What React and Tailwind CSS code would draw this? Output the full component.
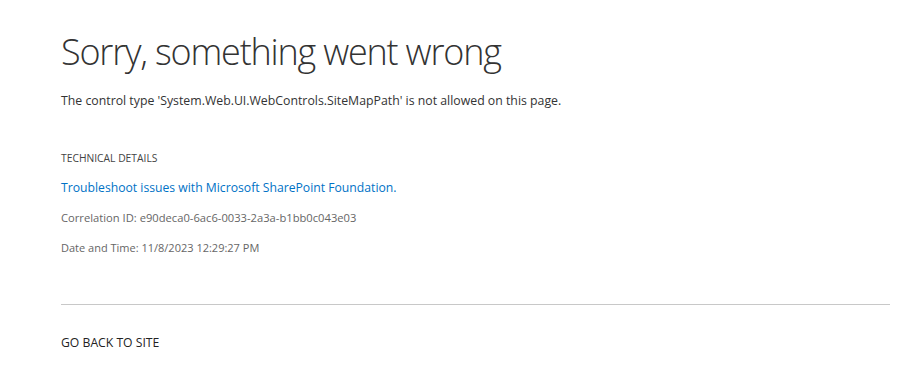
import React from 'react';

const ErrorPage = () => {
  return (
    <div className="min-h-screen bg-white font-['Open_Sans',sans-serif] text-[#333]">
      <div className="pl-[61px] pr-[29px] pt-[26px]">
        {/* Header */}
        <h1 className="text-[36px] leading-[52px] font-light text-[#333] tracking-[-1.2px]">
          Sorry, something went wrong
        </h1>
        <p className="mt-[12px] text-[12.3px] leading-[22px] text-[#333]">
          The control type 'System.Web.UI.WebControls.SiteMapPath' is not allowed on this page.
        </p>

        {/* Technical details */}
        <div className="mt-[38px]">
          <h2 className="text-[10.3px] leading-[16px] uppercase text-[#444]">Technical Details</h2>
          <a href="#" className="block mt-[14px] text-[12.2px] leading-[16px] text-[#0072c6]">
            Troubleshoot issues with Microsoft SharePoint Foundation.
          </a>
          <p className="mt-[14px] text-[11.2px] leading-[16px] text-[#666]">
            Correlation ID: e90deca0-6ac6-0033-2a3a-b1bb0c043e03
          </p>
          <p className="mt-[14px] text-[11px] leading-[16px] text-[#666]">
            Date and Time: 11/8/2023 12:29:27 PM
          </p>
        </div>

        <div className="mt-[48px] border-t border-[#c8c8c8]" />

        <a href="#" className="block mt-[30px] text-[12.2px] leading-[16px] uppercase text-[#222]">
          Go back to site
        </a>
      </div>
    </div>
  );
};

export default ErrorPage;
